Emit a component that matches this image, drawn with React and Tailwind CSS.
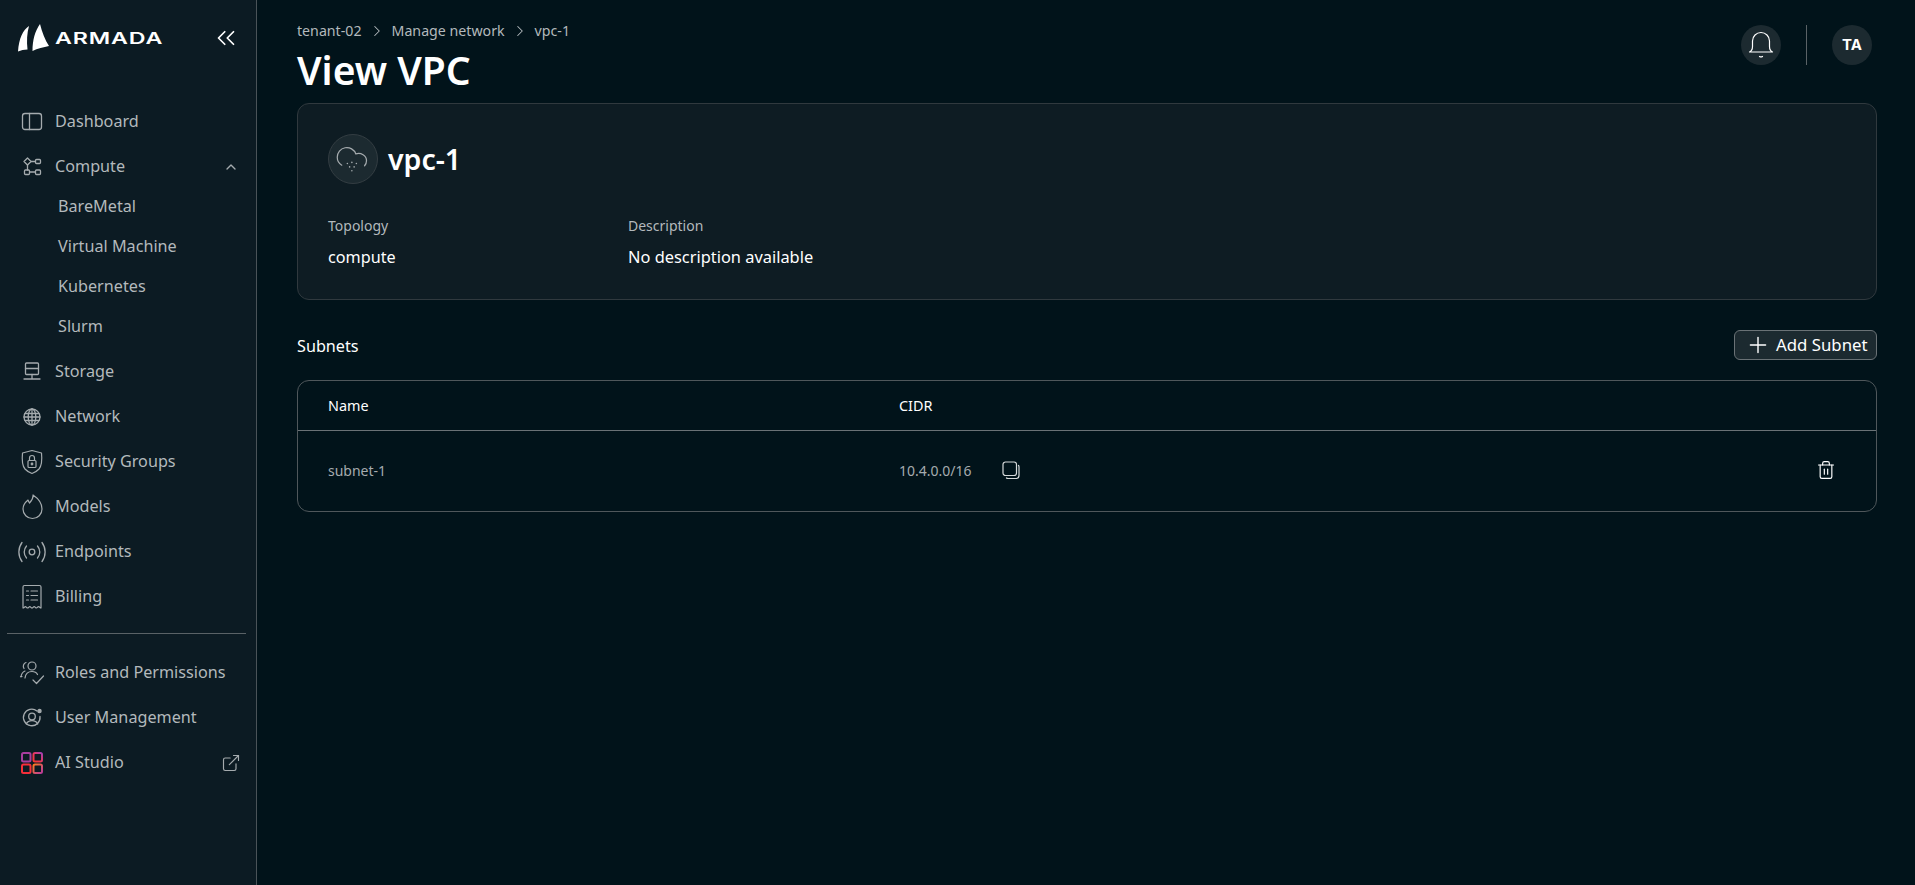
import {
  ChevronRight,
  ChevronUp,
  ChevronsLeft,
  ExternalLink,
  Plus,
  Trash2,
} from "lucide-react";

// Sidebar icons, drawn to match the reference strokes
function Svg({ children, className = "" }) {
  return (
    <svg viewBox="0 0 24 24" fill="none" stroke="currentColor" strokeWidth="1.3" strokeLinecap="round" strokeLinejoin="round" className={`w-[24px] h-[24px] ${className}`}>
      {children}
    </svg>
  );
}

const DashboardIcon = () => (
  <Svg>
    <rect x="2.5" y="3.5" width="19" height="16" rx="2.5" />
    <path d="M9.5 3.5v16" />
  </Svg>
);
const ComputeIcon = () => (
  <Svg>
    <path d="M7.500 3l3.500 3.500-3.500 3.500L4 6.500z" />
    <rect x="15.500" y="4.500" width="5" height="4" rx="1" />
    <rect x="4.500" y="15" width="5" height="4.500" rx="1" />
    <rect x="15.500" y="15" width="5" height="4.500" rx="1" />
    <path d="M11 6.500h4.500M9.500 17h6M7.500 10v5" />
  </Svg>
);
const StorageIcon = () => (
  <Svg>
    <rect x="5.500" y="3" width="13" height="11.500" rx="1" />
    <path d="M5.500 8.500h13M12 14.500v4.500M4 19h16" />
  </Svg>
);
const GlobeIcon = () => (
  <Svg>
    <circle cx="12" cy="12" r="8" />
    <ellipse cx="12" cy="12" rx="3.800" ry="8" />
    <path d="M12 4v16M4 12h16M5 8.500h14M5 15.500h14" />
  </Svg>
);
const ShieldIcon = () => (
  <svg viewBox="0 0 24 26" fill="none" stroke="currentColor" strokeWidth="1.2" strokeLinecap="round" strokeLinejoin="round" className="w-[24px] h-[26px]">
    <path d="M12 1.500l9.500 2.500c.6 6 .8 12-2.500 16-2 2.300-4.500 3.500-7 4.500-2.500-1-5-2.200-7-4.500C1.700 16 1.900 10 2.500 4z" />
    <rect x="8" y="11.500" width="8" height="7" rx="1" />
    <path d="M9.500 11.500V9a2.500 2.500 0 0 1 5 0v2.500" />
    <circle cx="12" cy="15" r="0.8" />
  </svg>
);
const FlameIcon = () => (
  <svg viewBox="0 0 24 28" fill="none" stroke="currentColor" strokeWidth="1.2" strokeLinecap="round" strokeLinejoin="round" className="w-[24px] h-[28px]">
    <path d="M13 2c.4 3.500-1 5.500-3.500 8-.7-1-1.200-2-1.500-3C5 9.500 3 12.500 3 16a9.500 9.500 0 0 0 19 0c0-6-4.500-11-9-14z" />
  </svg>
);
const SignalIcon = () => (
  <svg viewBox="0 0 30 24" fill="none" stroke="currentColor" strokeWidth="1.3" strokeLinecap="round" strokeLinejoin="round" className="w-[30px] h-[24px]">
    <circle cx="15" cy="12" r="2.800" />
    <path d="M9.500 6a9 9 0 0 0 0 12M20.500 6a9 9 0 0 1 0 12M5 2.500a16 16 0 0 0 0 19M25 2.500a16 16 0 0 1 0 19" />
  </svg>
);
const ReceiptIcon = () => (
  <svg viewBox="0 0 22 26" fill="none" stroke="currentColor" strokeWidth="1.2" strokeLinecap="round" strokeLinejoin="round" className="w-[22px] h-[26px]">
    <path d="M2 24V3a1.500 1.500 0 0 1 1.500-1.500h15A1.500 1.500 0 0 1 20 3v21c-1.200 0-1.200-1.300-2.400-1.300s-1.200 1.300-2.200 1.300-1.200-1.300-2.200-1.300-1.200 1.300-2.200 1.300-1.200-1.300-2.200-1.300-1.200 1.300-2.200 1.300-1.200-1.300-2.200-1.300S3.200 24 2 24z" />
    <path d="M5.500 7h2M10 7h6.500M5.500 11.500h2M10 11.500h6.500M5.500 16h2M10 16h6.500" />
  </svg>
);
const RolesIcon = () => (
  <svg viewBox="0 0 26 26" fill="none" stroke="currentColor" strokeWidth="1.2" strokeLinecap="round" strokeLinejoin="round" className="w-[26px] h-[26px]">
    <circle cx="13" cy="6" r="4" />
    <path d="M7 2.500A4 4 0 0 0 5 8.500M2 17c.3-3 1.500-5 4-6M6 18c.5-4 3-6.500 7-6.500 2.500 0 4.500 1 5.500 3M3 16.500H1.500M14 20l3.500 3.500L24.500 16" />
  </svg>
);
const UserGearIcon = () => (
  <Svg>
    <path d="M17 5a8.300 8.300 0 1 0 3 5.500" />
    <circle cx="12" cy="10.500" r="3.300" />
    <path d="M6.300 18c1-2.200 3-3.300 5.700-3.300s4.700 1.100 5.700 3.300" />
    <circle cx="19.500" cy="5" r="1.600" fill="currentColor" />
  </Svg>
);
const StudioIcon = () => (
  <svg viewBox="0 0 22 22" fill="none" strokeWidth="2" className="w-[22px] h-[22px]">
    <defs>
      <linearGradient id="studio" x1="0" y1="1" x2="1" y2="0">
        <stop offset="0" stopColor="#f7342f" />
        <stop offset="0.5" stopColor="#e8385f" />
        <stop offset="1" stopColor="#a13fb3" />
      </linearGradient>
      <linearGradient id="studio2" x1="0" y1="0" x2="1" y2="1">
        <stop offset="0" stopColor="#ff7a1f" />
        <stop offset="1" stopColor="#b83a9c" />
      </linearGradient>
    </defs>
    <rect x="1" y="1" width="8.500" height="8.500" rx="1.500" stroke="#a83e9e" />
    <rect x="12.500" y="1" width="8.500" height="8.500" rx="1.500" stroke="url(#studio)" />
    <rect x="1" y="12.500" width="8.500" height="8.500" rx="1.500" stroke="#f52f3a" />
    <rect x="12.500" y="12.500" width="8.500" height="8.500" rx="1.500" stroke="url(#studio2)" />
  </svg>
);

function Logo() {
  return (
    <div className="flex items-center gap-[6px]">
      <svg viewBox="0 0 31 28" className="w-[31px] h-[28px]" fill="#ffffff">
        <path d="M11 2C5 6 1 14 0 27.500c3-1.200 6-1.800 9.500-2C8.500 17 9 9 11 2z" />
        <path d="M22 0C17 7 14.500 16 14.500 27c5-2.500 11-3.800 16.500-5C27 16 24 8 22 0z" />
      </svg>
      <span className="font-['Inter',sans-serif] text-[16px] leading-none font-semibold tracking-[0.6px] scale-x-[1.45] origin-left text-white">
        ARMADA
      </span>
    </div>
  );
}

function NavItem({ icon, label, right }) {
  return (
    <div className="h-[45px] flex items-center text-[#b3b9bc] text-[16.2px]">
      <div className="w-[55px] pl-[8px] flex justify-center shrink-0 text-[#a5abae]">{icon}</div>
      <span>{label}</span>
      {right && <div className="ml-auto mr-[17px] text-[#a5abae]">{right}</div>}
    </div>
  );
}

function SubItem({ label }) {
  return <div className="h-[40px] flex items-center pl-[58px] text-[#b3b9bc] text-[16.2px]">{label}</div>;
}

function Sidebar() {
  return (
    <aside className="w-[257px] shrink-0 h-full bg-[#0c1b23] border-r border-[#4a5358]">
      <div className="h-[75px] pl-[18px] pr-[15px] flex items-center justify-between">
        <Logo />
        <ChevronsLeft className="w-[30px] h-[30px] text-white" strokeWidth={1.4} />
      </div>
      <nav className="pt-[24px]">
        <NavItem icon={<DashboardIcon />} label="Dashboard" />
        <NavItem
          icon={<ComputeIcon />}
          label="Compute"
          right={<ChevronUp className="w-[16px] h-[16px]" strokeWidth={2} />}
        />
        <div className="-mt-[3px] mb-[3px]">
          <SubItem label="BareMetal" />
          <SubItem label="Virtual Machine" />
          <SubItem label="Kubernetes" />
          <SubItem label="Slurm" />
        </div>
        <NavItem icon={<StorageIcon />} label="Storage" />
        <NavItem icon={<GlobeIcon />} label="Network" />
        <NavItem icon={<ShieldIcon />} label="Security Groups" />
        <NavItem icon={<FlameIcon />} label="Models" />
        <NavItem icon={<SignalIcon />} label="Endpoints" />
        <NavItem icon={<ReceiptIcon />} label="Billing" />
        <div className="ml-[7px] mr-[10px] mt-[14px] mb-[16px] border-t border-[#5a6266]" />
        <NavItem icon={<RolesIcon />} label="Roles and Permissions" />
        <NavItem icon={<UserGearIcon />} label="User Management" />
        <NavItem
          icon={<StudioIcon />}
          label="AI Studio"
          right={<ExternalLink className="w-[20px] h-[20px] -mr-[2px]" strokeWidth={1.4} />}
        />
      </nav>
    </aside>
  );
}

function Header() {
  return (
    <header className="h-[103px] flex justify-between">
      <div className="pt-[20px]">
        <div className="flex items-center text-[14.2px] leading-[22px] text-[#b3b9bc]">
          <span>tenant-02</span>
          <ChevronRight className="w-[18px] h-[18px] mx-[6px]" strokeWidth={1.4} />
          <span>Manage network</span>
          <ChevronRight className="w-[18px] h-[18px] mx-[6px]" strokeWidth={1.4} />
          <span>vpc-1</span>
        </div>
        <h1 className="mt-[1px] text-[39px] leading-[54px] font-semibold text-white">View VPC</h1>
      </div>
      <div className="flex items-start pt-[25px] pr-[5px]">
        <div className="w-[40px] h-[40px] rounded-full bg-[#1c2a30] flex items-center justify-center">
          <svg viewBox="0 0 26 28" fill="none" stroke="#ffffff" strokeWidth="1.2" strokeLinecap="round" strokeLinejoin="round" className="w-[26px] h-[28px]">
            <path d="M1.500 21c2-1 3-3 3-5.500V10a8.500 8.500 0 0 1 17 0v5.500c0 2.500 1 4.500 3 5.500z" />
            <path d="M11.500 25.500c1 .6 2 .6 3 0" />
          </svg>
        </div>
        <div className="w-px h-[40px] bg-[#5a6266] mx-[25px]" />
        <div className="w-[40px] h-[40px] rounded-full bg-[#1c2a30] flex items-center justify-center text-white text-[15px] font-bold font-['Inter',sans-serif]">
          TA
        </div>
      </div>
    </header>
  );
}

function VpcCard() {
  return (
    <section className="h-[197px] rounded-[12px] border border-[#30393e] bg-[#0e1c23] pt-[30px] px-[30px]">
      <div className="flex items-center gap-[10px]">
        <div className="w-[50px] h-[50px] rounded-full bg-[#1c2a30] border border-[#333d42] flex items-center justify-center">
          <svg viewBox="0 0 32 28" fill="none" stroke="#a5abae" strokeWidth="1.1" strokeLinecap="round" strokeLinejoin="round" className="w-[36px] h-[32px]">
            <path d="M6 19.500C3.500 18 2 15.500 2 12.500A8.500 8.500 0 0 1 18.500 9.500c4.500-1.500 9.500 1.500 9.500 6 0 1.800-.6 3.200-1.700 4.500" />
            <path d="M11 18v.01M15 17v.01M19 18v.01M13 21v.01M17 21v.01M15 24.500v.01" strokeWidth="1.4" />
          </svg>
        </div>
        <h2 className="text-[28.5px] leading-[40px] font-semibold text-white">vpc-1</h2>
      </div>
      <div className="mt-[32px] flex">
        <div className="w-[300px]">
          <div className="text-[14px] leading-[20px] text-[#b3b9bc]">Topology</div>
          <div className="mt-[10px] text-[16.2px] leading-[22px] text-white">compute</div>
        </div>
        <div>
          <div className="text-[14px] leading-[20px] text-[#b3b9bc]">Description</div>
          <div className="mt-[10px] text-[16.4px] leading-[22px] text-white">No description available</div>
        </div>
      </div>
    </section>
  );
}

function CopyIcon() {
  return (
    <svg viewBox="0 0 20 20" fill="none" stroke="#d6d9da" strokeWidth="1.2" strokeLinecap="round" strokeLinejoin="round" className="ml-[29px] w-[20px] h-[20px]">
      <rect x="2" y="2" width="13.500" height="13.500" rx="2.500" />
      <path d="M17.500 5.500c.4.400.5.900.5 1.500v8.500a3 3 0 0 1-3 3H7c-.6 0-1.100-.1-1.500-.5" />
    </svg>
  );
}

function Subnets() {
  return (
    <section>
      <div className="mt-[30px] h-[29px] flex items-center justify-between">
        <h3 className="mt-[3px] text-[16.2px] text-white">Subnets</h3>
        <button className="h-[30px] w-[143px] rounded-[6px] border border-[#6a7276] bg-[#1c2a30] flex items-center pl-[10px] gap-[5px] text-white text-[16.8px]">
          <Plus className="w-[26px] h-[26px]" strokeWidth={1.3} />
          Add Subnet
        </button>
      </div>
      <div className="mt-[21px] h-[132px] rounded-[12px] border border-[#4f575b]">
        <div className="h-[50px] border-b border-[#6a7276] flex items-center pl-[30px] text-[14.4px] text-white">
          <div className="w-[571px]">Name</div>
          <div>CIDR</div>
        </div>
        <div className="h-[78px] flex items-center pl-[30px] pr-[40px] text-[14px] text-[#a5abae]">
          <div className="w-[571px]">subnet-1</div>
          <div>10.4.0.0/16</div>
          <CopyIcon />
          <Trash2 className="ml-auto w-[20px] h-[20px] text-white" strokeWidth={1.4} />
        </div>
      </div>
    </section>
  );
}

export default function App() {
  return (
    <div className="flex w-full h-[885px] overflow-hidden bg-[#01131a] font-['Noto_Sans',sans-serif]">
      <Sidebar />
      <main className="flex-1 pl-[40px] pr-[38px]">
        <Header />
        <VpcCard />
        <Subnets />
      </main>
    </div>
  );
}
